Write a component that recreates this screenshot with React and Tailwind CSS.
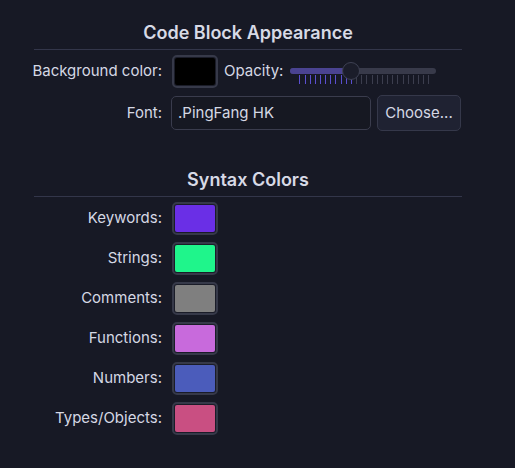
import React from "react";

// Code block + syntax colour preferences pane

const syntaxColors = [
  { label: "Keywords:", color: "bg-[#6a2fe6]" },
  { label: "Strings:", color: "bg-[#1ff58b]" },
  { label: "Comments:", color: "bg-[#7f7f7f]" },
  { label: "Functions:", color: "bg-[#c86adc]" },
  { label: "Numbers:", color: "bg-[#4b5cbb]" },
  { label: "Types/Objects:", color: "bg-[#c94f82]" },
];

function Swatch({ color }) {
  return (
    <div className="w-[46px] h-[33px] rounded-[5px] border-2 border-[#363949] bg-[#1a1c28] p-[1px]">
      <div className={`w-full h-full rounded-[2px] ${color}`} />
    </div>
  );
}

function SectionTitle({ children }) {
  return (
    <>
      <h2 className="h-[24px] leading-[24px] text-center text-[18px] font-semibold text-[#d7dae6]">
        {children}
      </h2>
      <div className="mt-[4px] h-px bg-[#33364a]" />
    </>
  );
}

function Label({ children }) {
  return (
    <div className="w-[128px] shrink-0 flex justify-end whitespace-nowrap text-[15px] text-[#d5d8e4]">
      {children}
    </div>
  );
}

function OpacitySlider({ value }) {
  const ticks = Array.from({ length: 26 }, (_, i) => i);
  const travel = 128;
  const thumbX = 9 + value * travel;
  return (
    <div className="relative w-[146px] h-[33px]">
      <div className="absolute left-0 right-0 top-[13px] h-[6px] rounded-full bg-[#383a4a]" />
      <div
        className="absolute left-0 top-[13px] h-[6px] rounded-full bg-[#4a4391]"
        style={{ width: thumbX }}
      />
      <div className="absolute left-[9px] w-[130px] top-[20px] h-[9px] flex justify-between">
        {ticks.map((i) => (
          <div
            key={i}
            className={`w-px h-full ${
              i * 5.2 <= thumbX - 8 ? "bg-[#5a4fd0]" : "bg-[#3c3e4e]"
            }`}
          />
        ))}
      </div>
      <div
        className="absolute top-[7px] w-[18px] h-[18px] rounded-full bg-[#1b1d2a] border border-[#3e4153]"
        style={{ left: thumbX - 9 }}
      />
    </div>
  );
}

export default function App() {
  return (
    <div
      className="w-[515px] h-[468px] bg-[#171925] overflow-hidden"
      style={{ fontFamily: "Inter, 'Noto Sans', sans-serif" }}
    >
      <div className="ml-[34px] w-[428px] pt-[21px]">
        <SectionTitle>Code Block Appearance</SectionTitle>

        <div className="mt-[5px] flex items-center h-[33px]">
          <Label>Background color:</Label>
          <div className="ml-[10px]">
            <Swatch color="bg-black" />
          </div>
          <span className="ml-[6px] text-[15px] text-[#d5d8e4]">Opacity:</span>
          <div className="ml-[7px]">
            <OpacitySlider value={0.4} />
          </div>
        </div>

        <div className="mt-[7px] flex items-center h-[36px]">
          <Label>Font:</Label>
          <div className="ml-[9px] w-[200px] h-[34px] rounded-[5px] border border-[#3a3c4d] bg-[#161822] flex items-center px-[6px] text-[15px] text-[#d5d8e4]">
            .PingFang HK
          </div>
          <button className="ml-[6px] w-[84px] h-[36px] rounded-[5px] border border-[#35384a] bg-[#1f2232] text-[15px] text-[#d5d8e4]">
            Choose...
          </button>
        </div>

        <div className="mt-[37px]">
          <SectionTitle>Syntax Colors</SectionTitle>
        </div>

        <div className="mt-[5px] flex flex-col gap-[7px]">
          {syntaxColors.map((s) => (
            <div key={s.label} className="flex items-center h-[33px]">
              <Label>{s.label}</Label>
              <div className="ml-[10px]">
                <Swatch color={s.color} />
              </div>
            </div>
          ))}
        </div>
      </div>
    </div>
  );
}
